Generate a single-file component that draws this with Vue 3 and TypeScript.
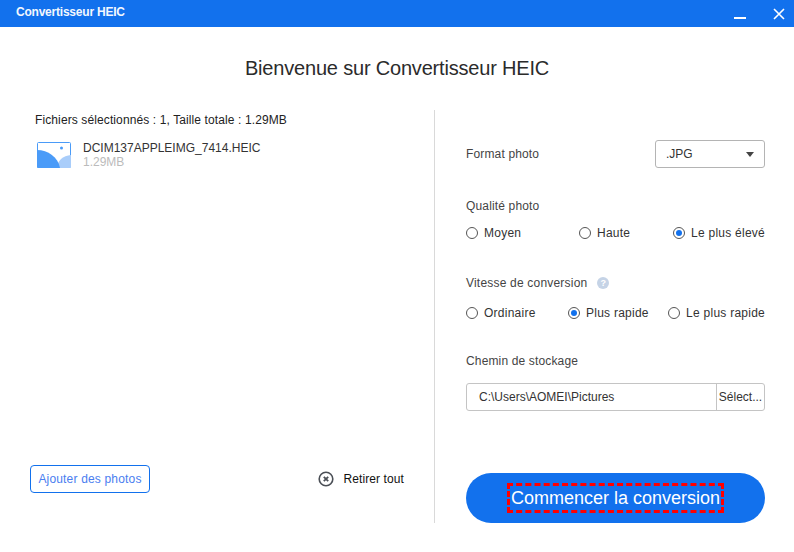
<script setup lang="ts">
import { ref } from 'vue'

interface Option {
  label: string
}

const qualities: Option[] = [{ label: 'Moyen' }, { label: 'Haute' }, { label: 'Le plus élevé' }]
const speeds: Option[] = [{ label: 'Ordinaire' }, { label: 'Plus rapide' }, { label: 'Le plus rapide' }]

const quality = ref('Le plus élevé')
const speed = ref('Plus rapide')
</script>

<template>
  <div class="window">
    <header class="titlebar">
      <span class="app-name">Convertisseur HEIC</span>
      <div class="win-buttons">
        <svg width="12" height="12" viewBox="0 0 12 12"><rect x="0" y="9" width="12" height="2" fill="#fff" /></svg>
        <svg width="12" height="12" viewBox="0 0 12 12"><path d="M1 1l10 10M11 1L1 11" stroke="#fff" stroke-width="1.6" fill="none" /></svg>
      </div>
    </header>

    <h1 class="welcome">Bienvenue sur Convertisseur HEIC</h1>

    <main class="content">
      <section class="files">
        <p class="files-summary">Fichiers sélectionnés : 1, Taille totale : 1.29MB</p>
        <div class="file-row">
          <svg class="file-icon" width="34" height="26" viewBox="0 0 34 26">
            <rect x="0.5" y="0.5" width="33" height="25" rx="1" fill="#fff" stroke="#4a9bf8" />
            <path d="M20 26C20 19 26 13.500 34 13V25a1 1 0 0 1-1 1z" fill="#a9cdfa" />
            <path d="M0 8C11 8 21 15 23 26H1a1 1 0 0 1-1-1z" fill="#4a9bf8" />
            <circle cx="24.500" cy="6" r="1.500" fill="#4a9bf8" />
          </svg>
          <div class="file-info">
            <span class="file-name">DCIM137APPLEIMG_7414.HEIC</span>
            <span class="file-size">1.29MB</span>
          </div>
        </div>
        <div class="files-actions">
          <button type="button" class="add-btn">Ajouter des photos</button>
          <button type="button" class="remove-btn">
            <svg width="16" height="16" viewBox="0 0 16 16">
              <circle cx="8" cy="8" r="6.800" fill="none" stroke="#4b4f56" stroke-width="1.600" />
              <path d="M5.800 5.800l4.400 4.400M10.200 5.800l-4.400 4.400" stroke="#4b4f56" stroke-width="1.800" fill="none" />
            </svg>
            <span>Retirer tout</span>
          </button>
        </div>
      </section>

      <section class="settings">
        <div class="format-row">
          <span class="label">Format photo</span>
          <div class="select">
            <span>.JPG</span>
            <i class="caret"></i>
          </div>
        </div>

        <div class="label quality-label">Qualité photo</div>
        <div class="radios quality-radios">
          <label v-for="o in qualities" :key="o.label" class="radio" @click="quality = o.label">
            <span class="radio-dot" :class="{ checked: quality === o.label }"></span>
            {{ o.label }}
          </label>
        </div>

        <div class="label speed-label">
          Vitesse de conversion
          <span class="help">?</span>
        </div>
        <div class="radios speed-radios">
          <label v-for="o in speeds" :key="o.label" class="radio" @click="speed = o.label">
            <span class="radio-dot" :class="{ checked: speed === o.label }"></span>
            {{ o.label }}
          </label>
        </div>

        <div class="label path-label">Chemin de stockage</div>
        <div class="path-box">
          <span class="path-value">C:\Users\AOMEI\Pictures</span>
          <span class="path-btn">Sélect...</span>
        </div>

        <button type="button" class="start-btn"><span class="start-text">Commencer la conversion</span></button>
      </section>
    </main>
  </div>
</template>

<style>
html, body { margin: 0; background: #fff; }
</style>

<style scoped>
.window {
  width: 794px;
  height: 552px;
  overflow: hidden;
  display: flex;
  flex-direction: column;
  font-family: "Liberation Sans", Arial, sans-serif;
  font-size: 12px;
  color: #333;
  background: #fff;
}
.titlebar {
  height: 27px;
  flex-shrink: 0;
  display: flex;
  align-items: center;
  justify-content: space-between;
  padding: 0 9px 3px 16px;
  box-sizing: border-box;
  background: #1271ed;
  color: #fff;
}
.app-name { font-weight: 700; font-size: 12px; letter-spacing: -0.22px; opacity: 0.95; }
.win-buttons { display: flex; gap: 27px; padding-top: 4px; }
.welcome {
  margin: 31px 0 0;
  height: 21px;
  line-height: 21px;
  font-size: 20px;
  font-weight: 400;
  letter-spacing: -0.19px;
  text-align: center;
  color: #2b2b2b;
}
.content {
  margin-top: 31px;
  height: 413px;
  display: flex;
}
.files {
  width: 435px;
  flex-shrink: 0;
  box-sizing: border-box;
  border-right: 1px solid #d9d9d9;
  padding-right: 30px;
  display: flex;
  flex-direction: column;
}
.files-summary {
  margin: 3px 0 0 35px;
  line-height: 14px;
  letter-spacing: 0.11px;
  color: #222;
}
.file-row {
  margin: 15px 0 0 37px;
  display: flex;
  gap: 12px;
}
.file-icon { flex-shrink: 0; }
.file-info {
  display: flex;
  flex-direction: column;
  line-height: 14px;
  margin-top: -1px;
}
.file-name { color: #333; }
.file-size { color: #bbb; }
.files-actions {
  margin-top: auto;
  margin-bottom: 30px;
  margin-left: 30px;
  display: flex;
  align-items: center;
  justify-content: space-between;
}
.add-btn {
  width: 120px;
  height: 28px;
  padding: 0;
  border: 1px solid #1271ed;
  border-radius: 4px;
  background: #fff;
  color: #4a7ef0;
  font: inherit;
  letter-spacing: 0.17px;
}
.remove-btn {
  display: flex;
  align-items: center;
  gap: 9px;
  padding: 0;
  border: none;
  background: none;
  color: #111;
  font: inherit;
  letter-spacing: 0.1px;
}
.settings {
  flex: 1;
  padding: 30px 29px 0 31px;
  display: flex;
  flex-direction: column;
  min-width: 0;
}
.label { line-height: 14px; color: #444; letter-spacing: 0.15px; }
.format-row {
  display: flex;
  align-items: center;
  justify-content: space-between;
}
.select {
  width: 110px;
  height: 28px;
  box-sizing: border-box;
  padding: 0 10px;
  border: 1px solid #b4b4b4;
  border-radius: 3px;
  display: flex;
  align-items: center;
  justify-content: space-between;
}
.caret {
  width: 0;
  height: 0;
  border-left: 4.500px solid transparent;
  border-right: 4.500px solid transparent;
  border-top: 5px solid #444;
}
.quality-label { margin-top: 31px; }
.quality-radios { margin-top: 13px; grid-template-columns: 113px 1fr auto; }
.speed-label {
  margin-top: 36px;
  display: flex;
  align-items: center;
  gap: 10px;
  letter-spacing: 0.2px;
}
.speed-radios { margin-top: 16px; grid-template-columns: 102px 1fr auto; }
.path-label { margin-top: 34px; }
.radios { display: grid; }
.radio {
  display: flex;
  align-items: center;
  gap: 6px;
  line-height: 14px;
  letter-spacing: 0.25px;
  color: #333;
}
.radio-dot {
  width: 12px;
  height: 12px;
  box-sizing: border-box;
  border: 1px solid #555;
  border-radius: 50%;
  background: #fff;
  display: block;
  position: relative;
}
.radio-dot.checked::after {
  content: "";
  position: absolute;
  inset: 2px;
  border-radius: 50%;
  background: #1271ed;
}
.help {
  width: 12px;
  height: 12px;
  border-radius: 50%;
  background: #c5d3e6;
  color: #fff;
  font-size: 9px;
  font-weight: 700;
  line-height: 12px;
  text-align: center;
}
.path-box {
  margin-top: 15px;
  height: 28px;
  box-sizing: border-box;
  border: 1px solid #c4c4c4;
  border-radius: 3px;
  display: flex;
  align-items: center;
}
.path-value { flex: 1; padding-left: 12px; color: #333; }
.path-btn {
  width: 47px;
  height: 100%;
  flex-shrink: 0;
  border-left: 1px solid #c4c4c4;
  display: flex;
  align-items: center;
  justify-content: center;
  color: #333;
}
.start-btn {
  margin-top: 62px;
  height: 50px;
  padding: 0;
  border: none;
  border-radius: 25px;
  background: #1271ed;
  color: #fff;
  font: inherit;
  font-size: 18px;
}
.start-text {
  display: inline-block;
  border: 3px dashed #f00;
  padding: 1px;
  line-height: 22px;
}
</style>
